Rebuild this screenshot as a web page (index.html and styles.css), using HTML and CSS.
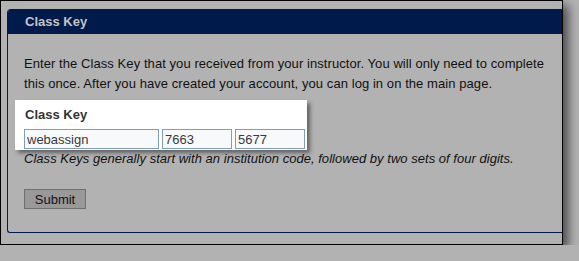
FILE: index.html
```html
<!DOCTYPE html>
<html>
<head>
<meta charset="utf-8">
<link rel="stylesheet" href="styles.css">
</head>
<body>
<div class="frame">
  <div class="panel">
    <div class="panel-head">Class Key</div>
    <div class="panel-body">
      <p class="intro">Enter the Class Key that you received from your instructor. You will only need to complete<br>this once. After you have created your account, you can log in on the main page.</p>
      <div class="spot">
        <div class="label">Class Key</div>
        <div class="inputs">
          <input class="key key-inst" type="text" value="webassign">
          <input class="key key-num" type="text" value="7663">
          <input class="key key-num" type="text" value="5677">
        </div>
      </div>
      <p class="hint">Class Keys generally start with an institution code, followed by two sets of four digits.</p>
      <button class="submit" type="button">Submit</button>
    </div>
  </div>
</div>
</body>
</html>
```

FILE: styles.css
```css
html, body {
  margin: 0;
  padding: 0;
  background: #b2b2b2;
  font-family: "Liberation Sans", Arial, sans-serif;
}

.frame {
  box-sizing: border-box;
  width: 563px;
  height: 245px;
  border: 1px solid #000;
  overflow: hidden;
  padding: 8px 0 0 6px;
  box-shadow: 5px 5px 10px rgba(0, 0, 0, 0.6);
}

.panel {
  height: 224px;
  box-sizing: border-box;
  border-left: 1px solid #001a4c;
  border-bottom: 1px solid #001a4c;
  border-radius: 4px 0 0 3px;
  overflow: hidden;
  background: #b2b2b2;
}

.panel-head {
  background: #001a4c;
  height: 25px;
  line-height: 25px;
  padding-left: 18px;
  margin-left: -1px;
  color: #c4c4c4;
  font-weight: bold;
  font-size: 13px;
}

.panel-body {
  padding: 20px 0 0 16px;
}

.intro {
  margin: 0;
  font-size: 13px;
  line-height: 20px;
  letter-spacing: 0.07px;
  color: #111;
  white-space: nowrap;
}

.spot {
  margin: 6px 0 0 -9px;
  width: 292px;
  box-sizing: border-box;
  padding: 7px 2px 1px 9px;
  background: #fff;
  box-shadow: 3px 3px 4px rgba(0, 0, 0, 0.45);
  position: relative;
}

.label {
  font-size: 13px;
  font-weight: bold;
  line-height: 16px;
  color: #333;
  padding-left: 1px;
}

.inputs {
  display: flex;
  gap: 3px;
  margin-top: 6px;
}

.key {
  height: 20px;
  box-sizing: border-box;
  border: 1px solid #7f9db9;
  background: #f8f9fb;
  font-family: "Liberation Sans", Arial, sans-serif;
  font-size: 13px;
  color: #3a3a3a;
  padding: 0 2px;
  margin: 0;
  outline: none;
}

.key-inst {
  width: 135px;
}

.key-num {
  width: 70px;
}

.hint {
  margin: 1px 0 0;
  font-size: 13px;
  line-height: 16px;
  letter-spacing: 0.03px;
  font-style: italic;
  color: #111;
  white-space: nowrap;
}

.submit {
  display: block;
  margin-top: 22px;
  width: 62px;
  height: 20px;
  padding: 0;
  box-sizing: border-box;
  border: 1px solid #6f6f6f;
  background: #999;
  font-family: "Liberation Sans", Arial, sans-serif;
  font-size: 13px;
  color: #111;
}
```
